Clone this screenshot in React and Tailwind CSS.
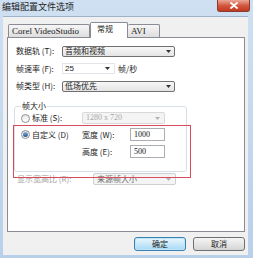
import React from 'react';

// Small drop-down arrow used by every combo box
function Arrow({ muted }) {
  return (
    <svg width="5" height="3" viewBox="0 0 5 3" className="shrink-0">
      <path d="M0 0 L5 0 L2.5 3 Z" fill={muted ? '#b4b4b4' : '#333'} />
    </svg>
  );
}

function Radio({ checked }) {
  return (
    <span className="w-[9px] h-[9px] rounded-full border border-[#8e8f8f] bg-linear-to-b from-[#e6e6e6] to-[#ffffff] flex items-center justify-center shrink-0">
      {checked && <span className="w-[5px] h-[5px] rounded-full bg-linear-to-b from-[#8ab4e4] to-[#1f4f8f]" />}
    </span>
  );
}

function Label({ children, className = '' }) {
  return <span className={`text-[8px] leading-[10px] text-[#1b1b1b] whitespace-nowrap ${className}`}>{children}</span>;
}

export default function App() {
  return (
    <div className="w-[253px] h-[258px] bg-linear-to-b from-[#cfe0f2] to-[#b9d0ea] flex flex-col overflow-hidden font-['Noto_Sans_CJK_SC',sans-serif]">
      {/* Title bar */}
      <div className="h-[16px] flex items-start justify-between">
        <span className="pl-[2px] pt-[1px] text-[9px] leading-[11px] text-[#1e1e1e]">编辑配置文件选项</span>
        <div className="mr-[3px] w-[33px] h-[12px] rounded-b-[3px] border border-t-0 border-[#8a3b2c] bg-linear-to-b from-[#e9a796] via-[#d2583f] to-[#c2391f] flex items-center justify-center">
          <svg width="8" height="7" viewBox="0 0 8 7">
            <path d="M1 1 L7 6 M7 1 L1 6" stroke="#fff" strokeWidth="1.8" strokeLinecap="round" />
          </svg>
        </div>
      </div>

      {/* Dialog body */}
      <div className="ml-[3px] mr-[5px] mb-[3px] flex-1 bg-[#f0f0f0] border-t border-[#9fb4cc] pt-[5px] flex flex-col">
        {/* Tabs */}
        <div className="h-[15px] pl-[5px] flex items-end relative z-10">
          <div className="w-[82px] h-[13px] border border-b-0 border-[#898c95] rounded-t-[2px] bg-linear-to-b from-[#f6f6f6] to-[#dedede] flex items-center pl-[3px] overflow-hidden">
            <span className="text-[9px] leading-[10px] font-['Liberation_Serif',serif] text-[#222] whitespace-nowrap">Corel VideoStudio</span>
          </div>
          <div className="w-[38px] h-[16px] -mb-px border border-b-0 border-[#898c95] rounded-t-[2px] bg-white flex items-start pl-[6px] pt-[1px]">
            <Label>常规</Label>
          </div>
          <div className="w-[32px] h-[13px] border border-b-0 border-l-0 border-[#898c95] rounded-t-[2px] bg-linear-to-b from-[#f6f6f6] to-[#dedede] flex items-center pl-[3px]">
            <span className="text-[9px] leading-[10px] font-['Liberation_Serif',serif] text-[#222]">AVI</span>
          </div>
        </div>

        {/* Tab page */}
        <div className="ml-[4px] mr-[3px] h-[195px] border border-[#898c95] bg-white relative pt-[4px] flex flex-col">
          <div className="h-[18px] pl-[8px] flex items-center">
            <Label className="w-[46px]">数据轨 (T):</Label>
            <div className="w-[113px] h-[11px] border border-[#707070] rounded-[2px] bg-linear-to-b from-[#f7f7f7] to-[#e4e4e4] flex items-center justify-between pl-[2px] pr-[3px]">
              <Label>音频和视频</Label>
              <Arrow />
            </div>
          </div>
          <div className="h-[17px] pl-[8px] flex items-center">
            <Label className="w-[46px]">帧速率 (F):</Label>
            <div className="w-[53px] h-[11px] border border-[#e2e5ea] bg-white flex items-center justify-between pl-[2px] pr-[4px]">
              <span className="text-[8px] leading-[10px] font-['Liberation_Sans',sans-serif] text-[#222]">25</span>
              <Arrow />
            </div>
            <Label className="ml-[3px]">帧/秒</Label>
          </div>
          <div className="h-[18px] pl-[8px] flex items-center">
            <Label className="w-[46px]">帧类型 (H):</Label>
            <div className="w-[113px] h-[11px] border border-[#707070] rounded-[2px] bg-linear-to-b from-[#f7f7f7] to-[#e4e4e4] flex items-center justify-between pl-[2px] pr-[3px]">
              <Label>低场优先</Label>
              <Arrow />
            </div>
          </div>

          {/* Frame size group */}
          <fieldset className="mt-[5px] ml-[6px] w-[173px] border border-[#d5dfe5] rounded-[3px] pb-[13px]">
            <legend className="ml-[6px] px-[1px] text-[8px] leading-[12px] text-[#1b1b1b]">帧大小</legend>
            <div className="h-[12px] pl-[6px] flex items-center">
              <div className="w-[61px] flex items-center gap-[2px]">
                <Radio />
                <Label>标准 (S):</Label>
              </div>
              <div className="w-[83px] h-[12px] border border-[#d9d9d9] rounded-[2px] bg-[#f4f4f4] flex items-center justify-between pl-[3px] pr-[4px]">
                <span className="text-[8px] leading-[10px] font-['Liberation_Serif',serif] text-[#a8a8a8]">1280 x 720</span>
                <Arrow muted />
              </div>
            </div>
            <div className="mt-[4px] h-[13px] pl-[6px] flex items-center">
              <div className="w-[61px] flex items-center gap-[2px]">
                <Radio checked />
                <Label>自定义 (D)</Label>
              </div>
              <Label className="w-[48px]">宽度 (W):</Label>
              <div className="w-[35px] h-[13px] border border-[#abadb3] bg-white flex items-center pl-[3px]">
                <span className="text-[8px] leading-[10px] font-['Liberation_Serif',serif] text-[#111]">1000</span>
              </div>
            </div>
            <div className="mt-[4px] h-[13px] pl-[6px] flex items-center">
              <div className="w-[61px]" />
              <Label className="w-[48px]">高度 (E):</Label>
              <div className="w-[35px] h-[13px] border border-[#abadb3] bg-white flex items-center pl-[3px]">
                <span className="text-[8px] leading-[10px] font-['Liberation_Serif',serif] text-[#111]">500</span>
              </div>
            </div>
          </fieldset>

          <div className="h-[14px] pl-[9px] flex items-center">
            <span className="w-[76px] text-[8px] leading-[10px] text-[#a3a3a3] whitespace-nowrap">显示宽高比 (R):</span>
            <div className="w-[83px] h-[12px] border border-[#cfcfcf] rounded-[2px] bg-[#f4f4f4] flex items-center justify-between pl-[3px] pr-[4px]">
              <span className="text-[8px] leading-[10px] text-[#6a6a6a]">来源帧大小</span>
              <Arrow muted />
            </div>
          </div>

          {/* Red annotation box */}
          <div className="absolute left-[5px] top-[87px] w-[178px] h-[53px] border border-[#d84c5c]" />
        </div>

        {/* Buttons */}
        <div className="mt-[5px] pr-[3px] flex justify-end gap-[7px]">
          <button className="w-[52px] h-[14px] rounded-[3px] border border-[#3c7fb1] bg-linear-to-b from-[#eaf6fd] via-[#c9e8f9] to-[#a7d9f5] shadow-[inset_0_0_0_1px_#bfe6f8] flex items-center justify-center">
            <Label>确定</Label>
          </button>
          <button className="w-[52px] h-[14px] rounded-[3px] border border-[#707070] bg-linear-to-b from-[#f4f4f4] via-[#e6e6e6] to-[#d4d4d4] flex items-center justify-center">
            <Label>取消</Label>
          </button>
        </div>
      </div>
    </div>
  );
}
